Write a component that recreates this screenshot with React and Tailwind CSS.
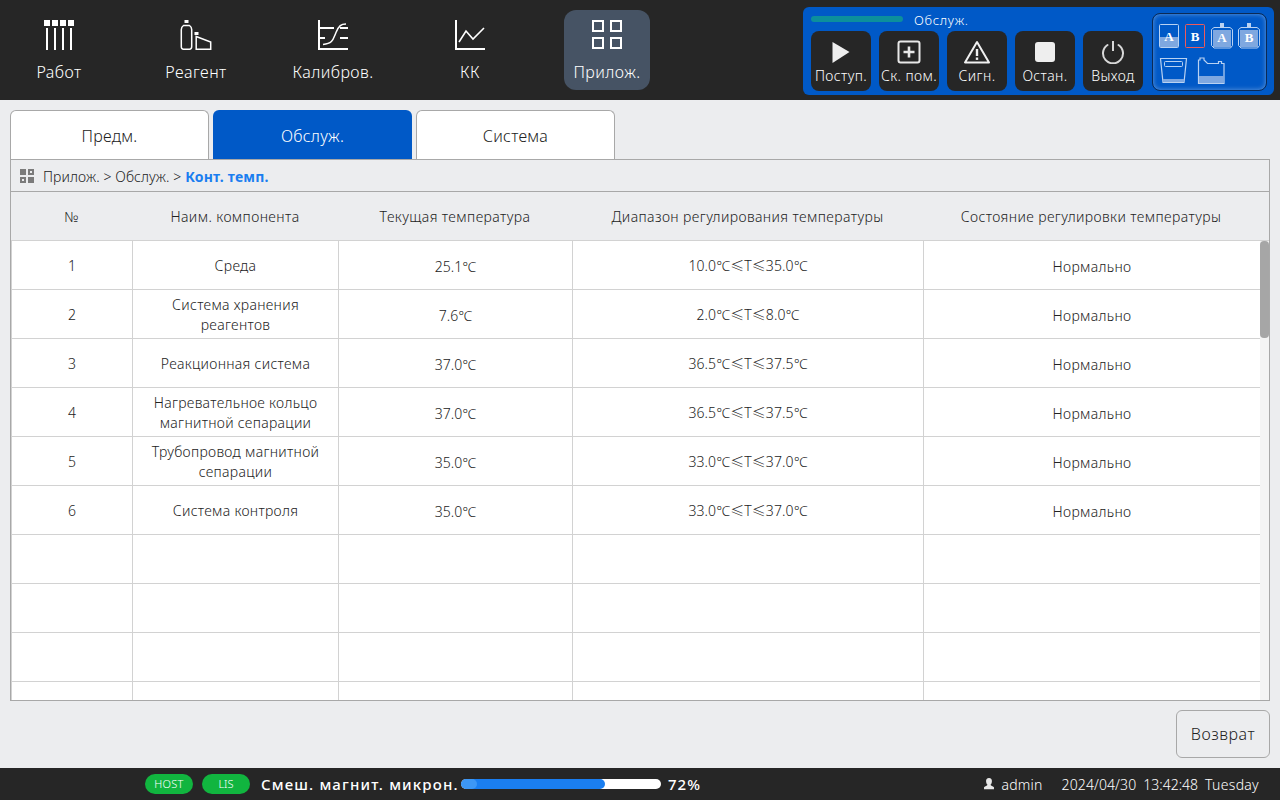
import React from 'react';

const IconWork = () => (
  <svg width="30" height="30" viewBox="0 0 30 30" fill="#fff">
    <rect x="0" y="0" width="6" height="6" /><rect x="8" y="0" width="6" height="6" />
    <rect x="16" y="0" width="6" height="6" /><rect x="24" y="0" width="6" height="6" />
    <rect x="2" y="8" width="2" height="22" /><rect x="10" y="8" width="2" height="22" />
    <rect x="18" y="8" width="2" height="22" /><rect x="26" y="8" width="2" height="22" />
  </svg>
);

const IconReagent = () => (
  <svg width="32" height="30" viewBox="-0.5 0 32 30" fill="none" stroke="#fff" strokeWidth="1.5">
    <rect x="4" y="0" width="4" height="3" fill="#fff" stroke="none" />
    <path d="M3 5.500h6q2.200 1.500 2.200 4v17q0 2.700-2.200 2.700H3q-2.200 0-2.200-2.700v-17q0-2.500 2.200-4z" />
    <rect x="14" y="12" width="4" height="3" fill="#fff" stroke="none" />
    <path d="M15.700 16.500l14.500 5.500v7.200H15.700z" />
  </svg>
);

const IconCalib = () => (
  <svg width="30" height="30" viewBox="0 0 30 30" fill="none" stroke="#fff" strokeWidth="2">
    <path d="M1 0v29h29" />
    <path d="M2 8h14M22 8h8M2 18h5M22 18h8" />
    <path d="M5 24.500c10-1 10-5 13-12s5-8.500 10-8.500" strokeWidth="1.500" />
  </svg>
);

const IconQc = () => (
  <svg width="30" height="30" viewBox="0 0 30 30" fill="none" stroke="#fff" strokeWidth="2">
    <path d="M1 0v29h30" />
    <path d="M4 22l7-11 7 8 11-11" strokeWidth="1.600" />
  </svg>
);

const IconApps = () => (
  <svg width="30" height="30" viewBox="0 0 30 30" fill="none" stroke="#fff" strokeWidth="2">
    <rect x="1" y="1" width="10" height="10" /><rect x="19" y="1" width="10" height="10" />
    <rect x="1" y="18" width="10" height="10" /><rect x="19" y="18" width="10" height="10" />
  </svg>
);

const navItems = [
  { label: 'Работ', icon: <IconWork /> },
  { label: 'Реагент', icon: <IconReagent /> },
  { label: 'Калибров.', icon: <IconCalib /> },
  { label: 'КК', icon: <IconQc /> },
  { label: 'Прилож.', icon: <IconApps />, active: true },
];

const actions = [
  {
    label: 'Поступ.',
    icon: (
      <svg width="24" height="24" viewBox="0 0 24 24" fill="#eeeeee"><path d="M3.500 2l17 10-17 11z" /></svg>
    ),
  },
  {
    label: 'Ск. пом.',
    icon: (
      <svg width="24" height="24" viewBox="0 0 24 24" fill="none" stroke="#e8e8e8" strokeWidth="2">
        <rect x="1.500" y="1.500" width="21" height="21" rx="2" />
        <path d="M12 6.500v11M6.500 12h11" strokeWidth="2.600" />
      </svg>
    ),
  },
  {
    label: 'Сигн.',
    icon: (
      <svg width="28" height="24" viewBox="0 0 28 24" fill="none" stroke="#f0f0f0" strokeWidth="2">
        <path d="M14 2L2 22.500h24z" strokeLinejoin="round" />
        <path d="M14 9v7" strokeWidth="2.400" />
        <path d="M14 17.500v2.400" strokeWidth="2.400" />
      </svg>
    ),
  },
  {
    label: 'Остан.',
    icon: <div className="w-[20px] h-[20px] rounded-[3px] bg-[#eeeeee]" />,
  },
  {
    label: 'Выход',
    icon: (
      <svg width="24" height="24" viewBox="0 0 24 24" fill="none" stroke="#d8d8d8" strokeWidth="2">
        <path d="M12 1v10" />
        <path d="M6.500 5a10 10 0 1 0 11 0" strokeLinecap="round" />
      </svg>
    ),
  },
];

const rows = [
  ['1', 'Среда', '25.1℃', '10.0℃≤T≤35.0℃', 'Нормально'],
  ['2', 'Система хранения реагентов', '7.6℃', '2.0℃≤T≤8.0℃', 'Нормально'],
  ['3', 'Реакционная система', '37.0℃', '36.5℃≤T≤37.5℃', 'Нормально'],
  ['4', 'Нагревательное кольцо магнитной сепарации', '37.0℃', '36.5℃≤T≤37.5℃', 'Нормально'],
  ['5', 'Трубопровод магнитной сепарации', '35.0℃', '33.0℃≤T≤37.0℃', 'Нормально'],
  ['6', 'Система контроля', '35.0℃', '33.0℃≤T≤37.0℃', 'Нормально'],
  ['', '', '', '', ''],
  ['', '', '', '', ''],
  ['', '', '', '', ''],
  ['', '', '', '', ''],
];

// per column tweaks: the value columns sit a little lower than the name columns
const cellStyles = [
  'pt-[2px]',
  'pt-[2px] tracking-[0.3px]',
  'pt-[4px]',
  'pt-[2px] tracking-[0.1px]',
  'pt-[4px] tracking-[0.33px]',
];

const letter = { fontFamily: "'Liberation Serif', serif", fontWeight: 700, fontSize: 13 };

const ReagentPanel = () => (
  <svg width="113" height="76" viewBox="0 0 113 76" fill="none" stroke="#b9d2f2" strokeWidth="1">
    <rect x="6.500" y="10.500" width="19" height="23" rx="1" />
    <rect x="7" y="23" width="18" height="10" fill="#7fa8e0" stroke="none" />
    <text x="16" y="27" textAnchor="middle" style={letter} fill="#fff" stroke="none">A</text>
    <rect x="32.500" y="10.500" width="19" height="23" rx="1" stroke="#ef5a5a" />
    <text x="42" y="27" textAnchor="middle" style={letter} fill="#fff" stroke="none">B</text>
    <rect x="67" y="9" width="4" height="4" fill="#b9d2f2" stroke="none" />
    <path d="M61 13.500h16l2.500 2v16l-2 2.500H61l-2.500-2.500v-16z" />
    <rect x="60" y="16" width="18" height="17" fill="#7fa8e0" stroke="none" />
    <text x="69" y="28" textAnchor="middle" style={letter} fill="#fff" stroke="none">A</text>
    <rect x="94" y="9" width="4" height="4" fill="#b9d2f2" stroke="none" />
    <path d="M88 13.500h16l2.500 2v16l-2 2.500H88l-2.500-2.500v-16z" />
    <rect x="87" y="16" width="18" height="17" fill="#7fa8e0" stroke="none" />
    <text x="96" y="28" textAnchor="middle" style={letter} fill="#fff" stroke="none">B</text>
    <path d="M7.500 44.500h26l-2.500 24H10z" strokeWidth="1.200" />
    <rect x="11.500" y="47.500" width="18" height="5" rx="1" />
    <rect x="10" y="65" width="21" height="3" fill="#7fa8e0" stroke="none" />
    <path d="M45.500 69.500V46h1.500v-2h4v2l3.500 3.500h11v-2h3v2h2.500v20z" strokeWidth="1.200" />
    <rect x="46" y="62" width="25" height="7" fill="#7fa8e0" stroke="none" />
  </svg>
);

const App = () => {
  return (
    <div className="w-[1280px] h-[800px] flex flex-col overflow-hidden bg-[#ecedef] font-['Noto_Sans','Noto_Sans_CJK_SC',sans-serif] font-light text-[#222222]">
      {/* top bar */}
      <header className="h-[100px] shrink-0 bg-[#262626] flex items-start justify-between pl-[16px] pr-[6px]">
        <nav className="flex gap-[51px] pt-[10px]">
          {navItems.map(item => (
            <div
              key={item.label}
              className={`w-[86px] h-[80px] rounded-[12px] flex flex-col items-center pt-[10px] ${item.active ? 'bg-[#465364]' : ''}`}
            >
              <div className="h-[30px] flex items-center justify-center">{item.icon}</div>
              <span className="mt-[10px] text-[16px] leading-[24px] tracking-[0.45px] text-white whitespace-nowrap">{item.label}</span>
            </div>
          ))}
        </nav>

        <div className="mt-[7px] w-[471px] h-[88px] rounded-[6px] bg-[#0059c7] flex pl-[8px] pr-[7px]">
          <div className="flex-1 flex flex-col">
            <div className="h-[24px] flex items-center">
              <div className="w-[92px] h-[6px] rounded-full bg-[#0c8f9c]" />
              <span className="ml-[11px] pt-[2px] text-[13px] leading-[18px] tracking-[0.7px] text-white">Обслуж.</span>
            </div>
            <div className="flex gap-[8px]">
              {actions.map(a => (
                <div key={a.label} className="w-[60px] h-[60px] rounded-[8px] bg-[#262626] flex flex-col items-center pt-[9px]">
                  <div className="h-[24px] flex items-center justify-center">{a.icon}</div>
                  <span className="mt-[2px] text-[14px] leading-[20px] tracking-[0.4px] text-white whitespace-nowrap">{a.label}</span>
                </div>
              ))}
            </div>
          </div>
          <div className="mt-[6px] w-[115px] h-[78px] rounded-[8px] border border-[#0b2a55] bg-[#0059c7] shadow-[inset_0_0_5px_rgba(255,255,255,0.4)]">
            <ReagentPanel />
          </div>
        </div>
      </header>

      {/* main */}
      <main className="flex-1 flex flex-col px-[10px] pt-[10px]">
        <div className="flex gap-[4px] h-[49px]">
          {['Предм.', 'Обслуж.', 'Система'].map((t, i) => (
            <div
              key={t}
              className={`w-[199px] rounded-t-[6px] flex items-center justify-center pt-[2px] text-[16px] tracking-[0.25px] ${
                i === 1 ? 'bg-[#0059c7] text-white' : 'bg-white border border-b-0 border-[#a8a8a8]'
              }`}
            >
              {t}
            </div>
          ))}
        </div>

        <section className="h-[542px] border border-[#a8a8a8] flex flex-col">
          <div className="h-[32px] shrink-0 border-b border-[#a8a8a8] flex items-center pl-[9px] text-[14px]">
            <div className="grid grid-cols-2 gap-[2px] w-[14px] h-[14px] mr-[9px]">
              <span className="bg-[#7b7b7b]" />
              <span className="bg-[#7b7b7b] p-[2px]"><span className="block w-full h-full bg-[#ecedef]" /></span>
              <span className="bg-[#7b7b7b] p-[2px]"><span className="block w-full h-full bg-[#ecedef]" /></span>
              <span className="bg-[#7b7b7b]" />
            </div>
            <span className="pt-[2px] tracking-[0.1px]">Прилож. &gt; Обслуж. &gt;&nbsp;</span>
            <span className="pt-[2px] font-bold tracking-[0.2px] text-[#1a7ef0]">Конт. темп.</span>
          </div>

          <div className="h-[49px] shrink-0 grid grid-cols-[121px_206px_234px_351px_1fr] items-center text-center text-[14px] tracking-[0.41px] border-b border-[#d2d2d2]">
            <div>№</div>
            <div>Наим. компонента</div>
            <div>Текущая температура</div>
            <div>Диапазон регулирования температуры</div>
            <div className="pr-[10px]">Состояние регулировки температуры</div>
          </div>

          <div className="flex-1 min-h-0 flex overflow-hidden">
            <div className="flex-1 bg-white overflow-hidden border-l border-[#d2d2d2]">
              {rows.map((r, i) => (
                <div key={i} className="h-[49px] grid grid-cols-[121px_206px_234px_351px_1fr] border-b border-[#d2d2d2] text-center text-[14px] leading-[20px]">
                  {r.map((c, j) => (
                    <div key={j} className={`flex items-center justify-center px-[8px] ${cellStyles[j]} ${j < 4 ? 'border-r border-[#d2d2d2]' : ''}`}>
                      {c}
                    </div>
                  ))}
                </div>
              ))}
            </div>
            <div className="w-[9px] shrink-0 bg-[#f4f4f4]">
              <div className="h-[97px] rounded-[4px] bg-[#a6a6a6]" />
            </div>
          </div>
        </section>

        <div className="flex justify-end mt-[9px]">
          <button className="w-[94px] h-[48px] rounded-[6px] border border-[#a8a8a8] text-[16px] tracking-[0.55px]">
            Возврат
          </button>
        </div>
      </main>

      {/* status bar */}
      <footer className="h-[32px] shrink-0 bg-[#262626] flex items-center pl-[145px] pr-[21px] text-white">
        <span className="w-[48px] h-[20px] rounded-full bg-[#11b53f] flex items-center justify-center text-[11px] tracking-[0.3px]">HOST</span>
        <span className="ml-[9px] w-[48px] h-[20px] rounded-full bg-[#11b53f] flex items-center justify-center text-[11px]">LIS</span>
        <span className="ml-[11px] w-[200px] text-[15px] font-medium tracking-[1.15px] whitespace-nowrap">Смеш. магнит. микрон.</span>
        <div className="w-[200px] h-[10px] rounded-full bg-white overflow-hidden">
          <div className="relative w-[144px] h-full rounded-full bg-[#1a7ef0]">
            <span className="absolute left-0 top-0 w-[16px] h-full rounded-full bg-[#3d97f5]" />
          </div>
        </div>
        <span className="ml-[7px] text-[15px] font-medium tracking-[1px]">72%</span>
        <div className="ml-auto flex items-center text-[14px]">
          <svg width="12" height="14" viewBox="0 0 14 14" fill="#e8e8e8" className="mr-[7px]">
            <path d="M7 0c2.400 0 3.600 1.800 3.400 4-.2 2-1 3.400-1.800 4 .2 1 3 1.600 4.200 2.800V13H1.200v-2.200C2.400 9.600 5.200 9 5.400 8c-.8-.6-1.600-2-1.800-4C3.400 1.800 4.600 0 7 0z" />
          </svg>
          <span className="tracking-[0.2px]">admin</span>
          <span className="ml-[19px] tracking-[0.1px]">2024/04/30</span>
          <span className="ml-[7px]">13:42:48</span>
          <span className="ml-[7px] tracking-[0.3px]">Tuesday</span>
        </div>
      </footer>
    </div>
  );
};

export default App;
